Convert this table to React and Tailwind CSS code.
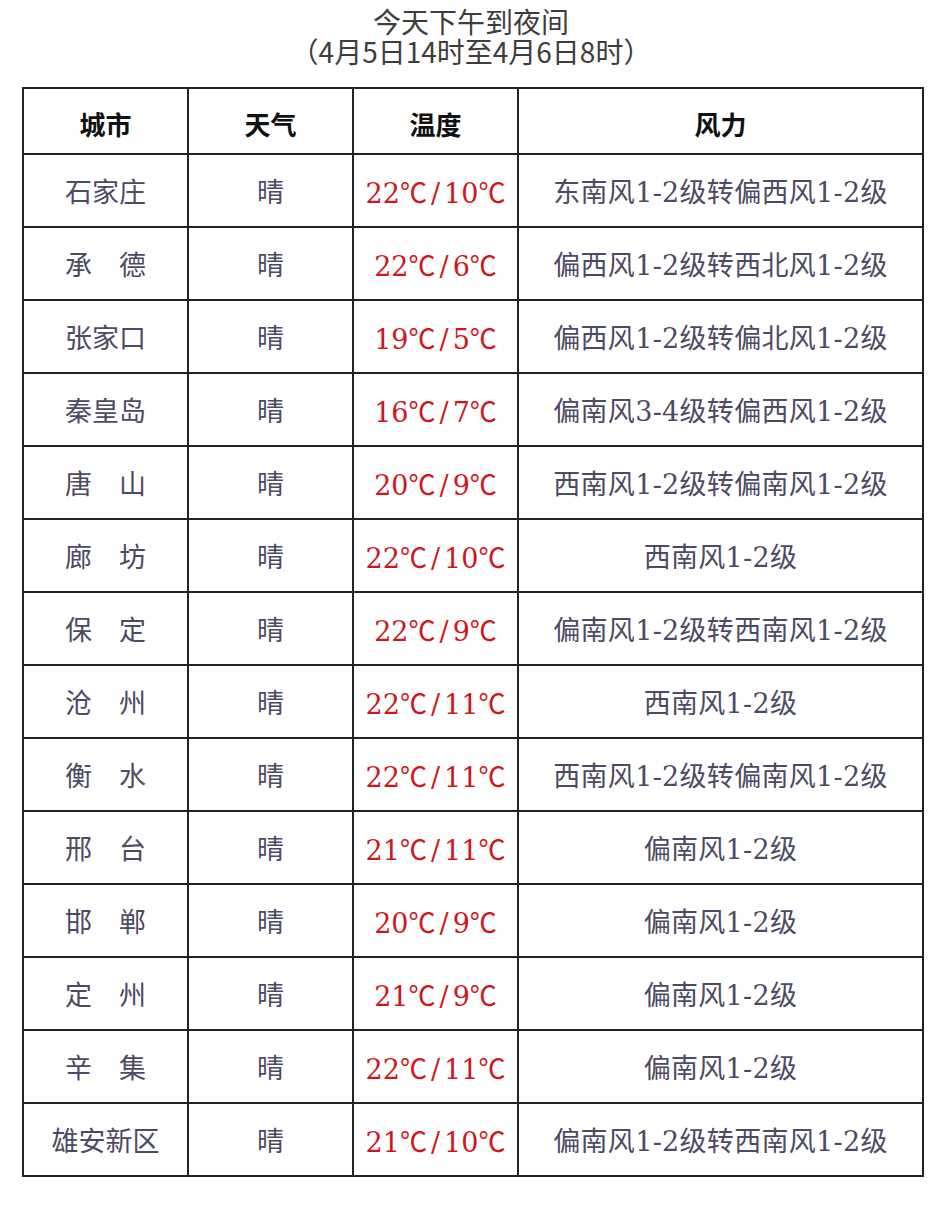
const rows = [
  ['石家庄', '22', '10', '东南风1-2级转偏西风1-2级'],
  ['承　德', '22', '6', '偏西风1-2级转西北风1-2级'],
  ['张家口', '19', '5', '偏西风1-2级转偏北风1-2级'],
  ['秦皇岛', '16', '7', '偏南风3-4级转偏西风1-2级'],
  ['唐　山', '20', '9', '西南风1-2级转偏南风1-2级'],
  ['廊　坊', '22', '10', '西南风1-2级'],
  ['保　定', '22', '9', '偏南风1-2级转西南风1-2级'],
  ['沧　州', '22', '11', '西南风1-2级'],
  ['衡　水', '22', '11', '西南风1-2级转偏南风1-2级'],
  ['邢　台', '21', '11', '偏南风1-2级'],
  ['邯　郸', '20', '9', '偏南风1-2级'],
  ['定　州', '21', '9', '偏南风1-2级'],
  ['辛　集', '22', '11', '偏南风1-2级'],
  ['雄安新区', '21', '10', '偏南风1-2级转西南风1-2级'],
]

const body = { fontFamily: "'DejaVu Serif', 'Noto Sans CJK SC', serif" }
const cjk = { fontFamily: "'Noto Sans CJK SC', sans-serif" }
const title = { fontFamily: "'Liberation Sans Narrow', 'Noto Sans CJK SC', sans-serif" }

// 温度：高温℃/低温℃
function Temp({ hi, lo }) {
  return (
    <>
      {hi}
      <span style={cjk}>℃</span>
      <span className="mx-[4px]">/</span>
      {lo}
      <span style={cjk}>℃</span>
    </>
  )
}

export default function App() {
  return (
    <div className="min-h-[1218px] w-[942px] bg-white" style={body}>
      <div className="pt-[6px] text-center text-[28px] leading-[30px] text-[#3d3d3d]" style={title}>
        <div>今天下午到夜间</div>
        <div>（4月5日14时至4月6日8时）</div>
      </div>

      <table className="ml-[22px] mt-[21px] w-[900px] table-fixed border-collapse">
        <colgroup>
          <col className="w-[165px]" />
          <col className="w-[165px]" />
          <col className="w-[165px]" />
          <col className="w-[405px]" />
        </colgroup>
        <thead>
          <tr className="h-[66px] text-[26px] text-[#111]" style={cjk}>
            <th className="border-2 border-[#222] pt-[4px] font-bold">城市</th>
            <th className="border-2 border-[#222] pt-[4px] font-bold">天气</th>
            <th className="border-2 border-[#222] pt-[4px] font-bold">温度</th>
            <th className="border-2 border-[#222] pt-[4px] font-bold">风力</th>
          </tr>
        </thead>
        <tbody>
          {rows.map(([city, hi, lo, wind]) => (
            <tr key={city} className="h-[73px] text-[27px] text-[#4d4a63]">
              <td className="border-2 border-[#222] pt-[6px] text-center">{city}</td>
              <td className="border-2 border-[#222] pt-[6px] text-center">晴</td>
              <td className="border-2 border-[#222] pt-[6px] text-center text-[#d0161c]">
                <Temp hi={hi} lo={lo} />
              </td>
              <td className="border-2 border-[#222] pt-[6px] text-center tracking-[0.3px]">{wind}</td>
            </tr>
          ))}
        </tbody>
      </table>
    </div>
  )
}
